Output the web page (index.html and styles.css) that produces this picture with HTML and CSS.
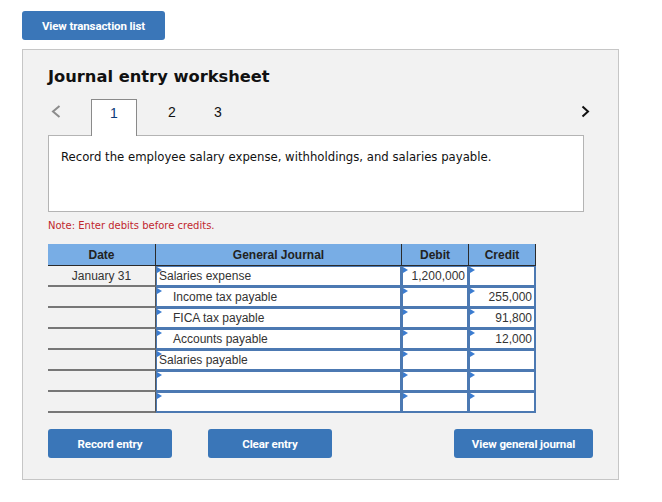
FILE: index.html
```html
<!DOCTYPE html>
<html lang="en">
<head>
  <meta charset="UTF-8" />
  <title>Journal entry worksheet</title>
  <link rel="stylesheet" href="styles.css">
</head>
<body>
  <div class="page">
    <button class="btn btn-top">View transaction list</button>

    <section class="worksheet">
      <h1>Journal entry worksheet</h1>

      <div class="tabs">
        <svg class="arrow arrow-prev" width="10" height="13" viewBox="0 0 10 13">
          <path d="M8.5 1 L2 6.5 L8.5 12" fill="none" stroke="#8c8c8c" stroke-width="2" />
        </svg>
        <span class="tab active">1</span>
        <span class="tab">2</span>
        <span class="tab">3</span>
        <svg class="arrow arrow-next" width="9" height="13" viewBox="0 0 9 13">
          <path d="M1.5 1.5 L7 6.5 L1.5 11.5" fill="none" stroke="#111" stroke-width="2" />
        </svg>
      </div>

      <div class="question">
        Record the employee salary expense, withholdings, and salaries payable.
      </div>

      <p class="note">Note: Enter debits before credits.</p>

      <table class="journal">
        <thead>
          <tr>
            <th class="col-date">Date</th>
            <th class="col-account">General Journal</th>
            <th class="col-amount">Debit</th>
            <th class="col-amount">Credit</th>
          </tr>
        </thead>
        <tbody id="journal-body"></tbody>
      </table>

      <div class="actions">
        <button class="btn btn-action">Record entry</button>
        <button class="btn btn-action">Clear entry</button>
        <button class="btn btn-journal">View general journal</button>
      </div>
    </section>
  </div>

  <script>
    const linhas = [
      { data: 'January 31', conta: 'Salaries expense', debito: '1,200,000', credito: '' },
      { data: '', conta: 'Income tax payable', recuo: true, debito: '', credito: '255,000' },
      { data: '', conta: 'FICA tax payable', recuo: true, debito: '', credito: '91,800' },
      { data: '', conta: 'Accounts payable', recuo: true, debito: '', credito: '12,000' },
      { data: '', conta: 'Salaries payable', debito: '', credito: '' },
      { data: '', conta: '', debito: '', credito: '' },
      { data: '', conta: '', debito: '', credito: '' }
    ];

    const corpo = document.getElementById('journal-body');

    linhas.forEach((item) => {
      const row = document.createElement('tr');
      row.innerHTML = `
        <td class="date">${item.data}</td>
        <td><div class="field${item.recuo ? ' indent' : ''}">${item.conta}</div></td>
        <td><div class="field num">${item.debito}</div></td>
        <td><div class="field num">${item.credito}</div></td>
      `;
      corpo.appendChild(row);
    });
  </script>
</body>
</html>
```

FILE: styles.css
```css
body {
  margin: 0;
  background: #ffffff;
  font-family: 'Liberation Sans', Arial, sans-serif;
  color: #333333;
}

.page {
  padding: 11px 0 0 22px;
}

.btn {
  border: none;
  border-radius: 3px;
  background-color: #3a76b8;
  color: #ffffff;
  font-family: Roboto, 'Liberation Sans', sans-serif;
  font-weight: bold;
  font-size: 11.5px;
  letter-spacing: -0.1px;
  cursor: pointer;
  padding: 0;
}

.btn-top {
  display: block;
  width: 143px;
  height: 29px;
}

.worksheet {
  width: 597px;
  box-sizing: border-box;
  margin-top: 9px;
  padding: 17px 34px 21px 25px;
  background-color: #f2f2f2;
  border: 1px solid #c6c6c6;
}

h1 {
  margin: 0;
  font-family: 'DejaVu Sans', Verdana, sans-serif;
  font-size: 16.3px;
  line-height: 20px;
  color: #111111;
}

.tabs {
  display: flex;
  align-items: flex-start;
  margin-top: 12px;
  height: 36px;
}

.arrow {
  display: block;
  margin-top: 6px;
}

.arrow-prev {
  margin-left: 3px;
  margin-right: 30px;
}

.arrow-next {
  margin-left: auto;
  margin-right: -6px;
}

.tab {
  width: 46px;
  height: 36px;
  box-sizing: border-box;
  padding-top: 5px;
  text-align: center;
  font-size: 14px;
  line-height: 16px;
  color: #111111;
}

.tab.active {
  background-color: #ffffff;
  border: 1px solid #8a8a8a;
  border-bottom: none;
  color: #0b3b7a;
  margin-right: 12px;
  position: relative;
  z-index: 1;
  height: 37px;
}

.question {
  height: 77px;
  box-sizing: border-box;
  padding: 13px 12px;
  background-color: #ffffff;
  border: 1px solid #b4b4b4;
  font-family: 'DejaVu Sans', Verdana, sans-serif;
  font-size: 11.7px;
  line-height: 16px;
  color: #111111;
}

.note {
  margin: 7px 0 0;
  font-family: 'DejaVu Sans', Verdana, sans-serif;
  font-size: 10px;
  line-height: 14px;
  color: #c1272d;
}

.journal {
  margin-top: 11px;
  border-collapse: separate;
  border-spacing: 0;
  table-layout: fixed;
  width: 488px;
  font-size: 12px;
}

.journal th {
  height: 22px;
  box-sizing: border-box;
  padding: 0;
  background-color: #78ade5;
  border-right: 1px solid #2b2b2b;
  border-bottom: 1px solid #2b2b2b;
  color: #222222;
  font-weight: bold;
  text-align: center;
}

.col-date { width: 108px; }
.col-account { width: 246px; }
.col-amount { width: 67px; }

.journal td {
  padding: 0;
  height: 21px;
}

.journal td.date {
  box-sizing: border-box;
  border-bottom: 2px solid #777777;
  border-right: 1px solid #555555;
  text-align: center;
  line-height: 18px;
  color: #333333;
}

.field {
  position: relative;
  height: 21px;
  box-sizing: border-box;
  border-style: solid;
  border-color: #4c79b2;
  border-width: 1px 2px 2px 1px;
  background-color: #ffffff;
  padding: 0 2px;
  line-height: 18px;
  white-space: nowrap;
  color: #333333;
}

.field::before {
  content: '';
  position: absolute;
  left: 0;
  top: 0;
  border-left: 5px solid #3b7cd0;
  border-top: 3px solid transparent;
  border-bottom: 3px solid transparent;
}

.field.indent {
  padding-left: 16px;
}

.field.num {
  text-align: right;
}

.actions {
  display: flex;
  margin-top: 16px;
  margin-right: -9px;
}

.btn-action {
  width: 124px;
  height: 29px;
  margin-right: 36px;
}

.btn-journal {
  width: 139px;
  height: 29px;
  margin-left: auto;
}
```
